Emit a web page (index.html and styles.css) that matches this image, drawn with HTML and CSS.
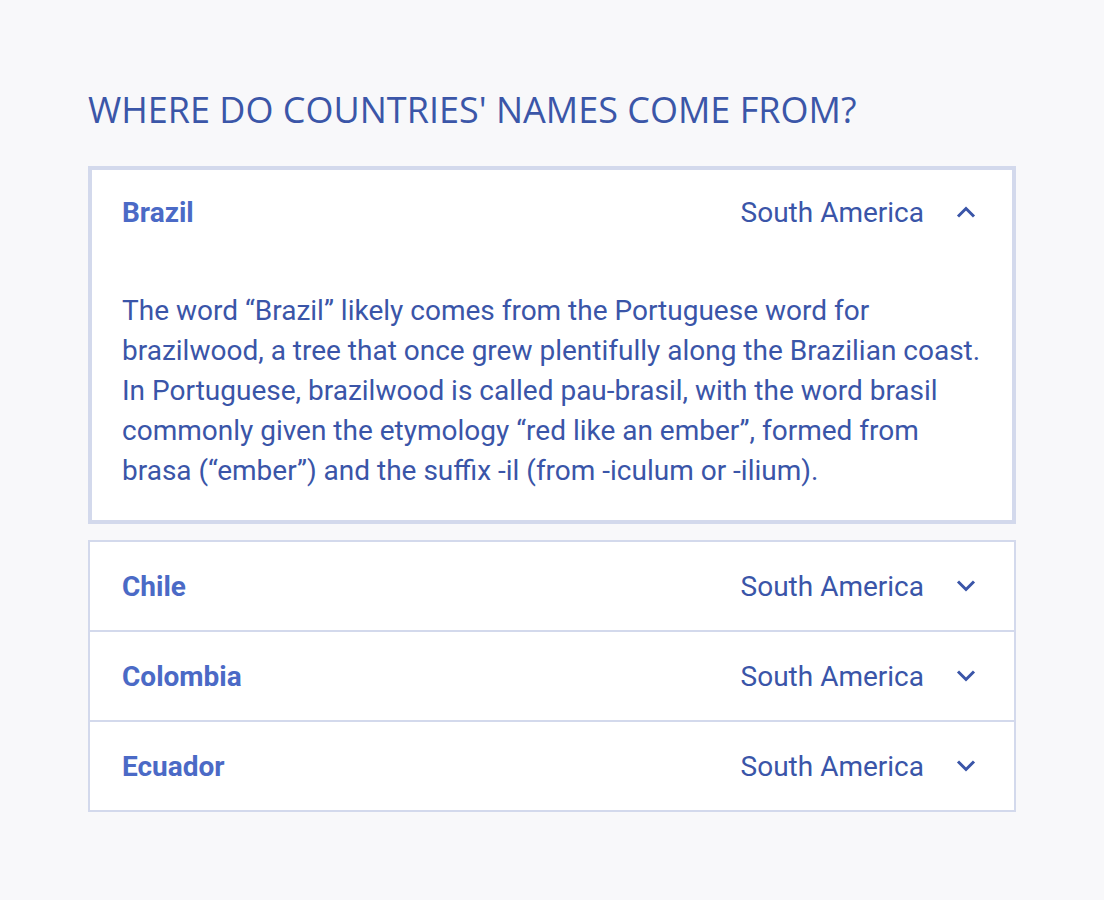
FILE: index.html
```html
<!DOCTYPE html>
<html lang="en">
<head>
    <meta charset="UTF-8">
    <meta name="viewport" content="width=device-width, initial-scale=1.0">
    <title>Where do countries' names come from?</title>
    <link rel="stylesheet" href="styles.css">
</head>
<body>
    <div class="page">
        <h1 class="title">Where do countries' names come from?</h1>

        <!-- open item -->
        <div class="card open">
            <div class="row">
                <span class="name">Brazil</span>
                <span class="region">South America</span>
                <svg class="chev" width="20" height="12" viewBox="0 0 20 12"><path d="M2 10.5 L10 2.5 L18 10.5" /></svg>
            </div>
            <p class="text">
                The word “Brazil” likely comes from the Portuguese word for
                brazilwood, a tree that once grew plentifully along the Brazilian coast.
                In Portuguese, brazilwood is called pau-brasil, with the word brasil
                commonly given the etymology “red like an ember”, formed from
                brasa (“ember”) and the suffix -il (from -iculum or -ilium).
            </p>
        </div>

        <div class="card list">
            <div class="row">
                <span class="name">Chile</span>
                <span class="region">South America</span>
                <svg class="chev" width="20" height="12" viewBox="0 0 20 12"><path d="M2 1.5 L10 9.5 L18 1.5" /></svg>
            </div>
            <div class="row">
                <span class="name">Colombia</span>
                <span class="region">South America</span>
                <svg class="chev" width="20" height="12" viewBox="0 0 20 12"><path d="M2 1.5 L10 9.5 L18 1.5" /></svg>
            </div>
            <div class="row">
                <span class="name">Ecuador</span>
                <span class="region">South America</span>
                <svg class="chev" width="20" height="12" viewBox="0 0 20 12"><path d="M2 1.5 L10 9.5 L18 1.5" /></svg>
            </div>
        </div>
    </div>
</body>
</html>
```

FILE: styles.css
```css
body{
    margin: 0;
    background-color: #f8f8fa;
    font-family: Roboto, "Liberation Sans", sans-serif;
    color: #3a55a8;
}
.page{
    width: 928px;
    padding: 88px 0 0 88px;
}
.title{
    margin: 0 0 34px;
    font-family: "Open Sans", sans-serif;
    font-weight: 400;
    font-size: 36px;
    line-height: 44px;
    text-transform: uppercase;
    color: #3b56a8;
}
.card{
    background-color: #fff;
    border: 2px solid #d3d9ec;
}
.card.open{
    border-width: 4px;
    margin-bottom: 16px;
}
.row{
    display: flex;
    align-items: center;
    height: 88px;
    padding: 0 38px 0 32px;
}
.row + .row{
    border-top: 2px solid #d3d9ec;
}
.open .row{
    height: 84px;
    padding: 0 36px 0 30px;
}
.name{
    flex: 1;
    font-weight: 700;
    font-size: 28px;
    color: #4b6ac6;
}
.region{
    font-size: 28px;
    margin-right: 32px;
}
.chev{
    display: block;
}
.chev path{
    fill: none;
    stroke: #3a55a8;
    stroke-width: 3;
}
.text{
    margin: 0;
    padding: 37px 30px 29px;
    font-size: 28px;
    line-height: 40px;
}
```
